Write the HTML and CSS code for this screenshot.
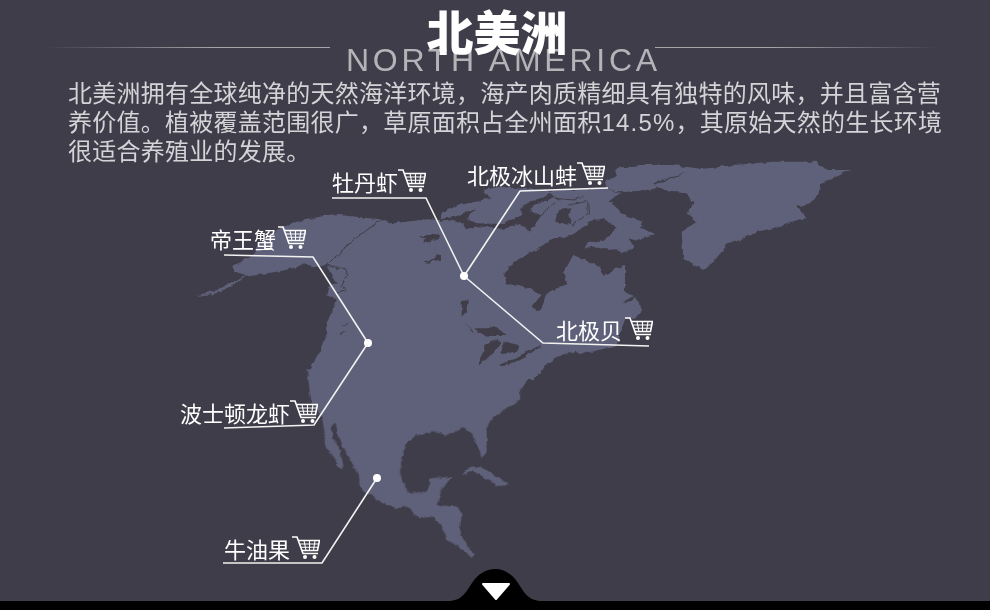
FILE: index.html
```html
<!DOCTYPE html>
<html lang="zh">
<head>
<meta charset="utf-8">
<title>北美洲</title>
<link rel="stylesheet" href="styles.css">
</head>
<body>
<svg width="0" height="0" class="defs">
  <filter id="rough" x="-5%" y="-5%" width="110%" height="110%">
    <feTurbulence type="fractalNoise" baseFrequency="0.16" numOctaves="2" seed="4"/>
    <feDisplacementMap in="SourceGraphic" scale="4.5" xChannelSelector="R" yChannelSelector="G"/>
  </filter>
  <symbol id="cart" viewBox="0 0 28 24">
    <path class="cart-line" d="M0 1 H5 L11 17.5 H26"/>
    <path class="cart-line" d="M6 4.5 H27.5 L25.5 14.5 H9.5"/>
    <path class="cart-line thin" d="M7.5 8 H27 M8.5 11.3 H26 M12 4.5 L14 14.5 M17.5 4.5 V14.5 M23 4.5 L21.5 14.5"/>
    <circle class="cart-wheel" cx="13" cy="21" r="2"/>
    <circle class="cart-wheel" cx="22.5" cy="21" r="2"/>
  </symbol>
</svg>
<main class="page">
  <svg class="map" viewBox="0 0 990 610" width="990" height="610" aria-hidden="true">
    <g class="coast">
    <g transform="translate(180 160) scale(.33333)">
      <path class="land" d="M45 408 L110 390 180 358 197 345 165 335 160 318 190 300 215 290 225 270 265 225 300 205 350 185 400 175 430 168 480 165 540 172 600 178 630 190 680 185 740 178 790 180 990 180 990 660 380 660 400 610 420 570 442 515 440 485 465 440 470 418 440 402 445 380 470 372 440 315 400 322 370 310 340 325 290 335 230 345 197 350 150 382 100 402 Z"/>
      <path class="gap" d="M605 178 L520 240 440 315"/>
      <path class="gap" d="M440 315 L470 325 495 325 500 345 485 375 495 390 470 400"/>
      <path class="gap" d="M481 525 L495 510 M490 500 L500 488"/>
      <path class="sea" d="M715 230 L760 222 800 225 770 235 745 250 725 245 740 238Z"/>
      <path class="sea" d="M730 305 L765 295 770 283 800 290 845 280 810 292 775 300 745 308Z"/>
    </g>
    <g transform="translate(440 160) scale(.33333)">
      <path class="land" d="M10 155 L60 135 105 125 155 112 130 100 125 90 180 80 225 85 340 92 380 90 500 85 540 100 505 125 510 125 560 170 610 185 600 200 645 225 590 240 565 235 585 265 545 278 540 290 555 315 555 395 580 410 600 430 605 455 590 472 555 478 530 555 420 585 410 572 350 590 305 630 280 660 0 660 0 180Z"/>
      <path class="land" d="M525 25 L600 15 700 15 790 28 720 42 640 70 655 85 600 92 540 97 500 85 495 65 530 45Z"/>
      <path class="land" d="M760 30 L880 15 1000 5 1130 5 1160 30 1230 30 1140 70 1145 90 1110 130 1070 140 1100 175 1000 205 950 215 880 245 860 250 850 270 800 328 770 320 730 295 725 215 770 185 740 160 760 130 740 100 690 95 640 75 720 45Z"/>
      <path class="sea" d="M0 178 L45 170 105 145 82 176 110 190 190 192 240 165 245 140 272 140 272 155 305 165 270 215 240 192 190 207 110 198 80 207 72 190 40 180 0 185Z"/>
      <path class="sea" d="M245 140 L270 125 300 115 330 98 345 112 300 128 272 142Z"/>
      <path class="sea" d="M345 185 L355 150 395 145 385 165 395 195 370 190Z"/>
      <path class="gap" d="M303 165 L345 128 M345 115 L400 120 430 110 M385 135 L440 125 M443 128 L445 160 395 198"/>
      <path class="sea" d="M190 340 L235 298 290 270 330 240 390 228 445 195 440 185 490 175 530 205 490 240 440 250 435 262 500 265 535 272 548 295 562 310 490 347 480 320 400 285 370 340 382 370 318 402 305 445 285 455 278 435 305 405 265 385 200 370Z"/>
      <path class="sea" d="M550 428 L570 415 598 405 575 422Z"/>
      <path class="sea" d="M100 505 L140 505 165 498 200 525 170 525 140 530Z"/>
      <path class="sea" d="M115 615 L135 555 170 540 185 548 165 575 135 600Z"/>
      <path class="sea" d="M180 580 L195 545 235 555 235 570 190 585Z"/>
      <path class="sea" d="M175 615 L230 595 290 560 305 558 240 600 185 618Z"/>
      <path class="sea" d="M65 425 L85 418 75 470 65 470Z"/>
      <path class="gap" d="M75 490 L100 515"/>
    </g>
    <g transform="translate(170 370) scale(.33333)">
      <path class="land" d="M410 -5 L420 70 425 100 455 140 465 195 460 210 490 265 515 300 520 285 510 240 490 205 482 170 497 158 505 205 530 250 548 280 565 320 565 345 590 370 630 395 680 415 710 410 750 445 790 440 810 465 835 510 860 525 900 560 915 555 880 510 870 480 875 430 860 410 800 405 815 360 845 320 780 325 770 365 720 370 705 350 690 310 695 260 710 220 740 195 800 185 825 195 880 175 905 190 935 265 950 240 950 180 960 150 1050 90 1050 60 1100 -5 Z"/>
      <path class="land" d="M875 315 L900 290 930 290 980 320 1020 345 975 348 960 330 910 305Z"/>
    </g>
    </g>
    <polyline class="lead" points="332,198 426,198 464,276"/>
    <polyline class="lead" points="608,188 520,191 464,276"/>
    <polyline class="lead" points="649,346 543,343 464,276"/>
    <polyline class="lead" points="224,255 313,257 368,343"/>
    <polyline class="lead" points="224,428 314,425 368,343"/>
    <polyline class="lead" points="223,563 322,563 377,478"/>
    <circle class="dot" cx="464" cy="276" r="4"/>
    <circle class="dot" cx="368" cy="343" r="4"/>
    <circle class="dot" cx="377" cy="478" r="4"/>
  </svg>

  <header class="head">
    <h1 class="title">北美洲</h1>
    <div class="sub-row">
      <span class="rule rule-left"></span>
      <span class="sub">NORTH AMERICA</span>
      <span class="rule rule-right"></span>
    </div>
    <p class="intro">北美洲拥有全球纯净的天然海洋环境，海产肉质精细具有独特的风味，并且富含营养价值。植被覆盖范围很广，草原面积占全州面积<span class="num">14.5%</span>，其原始天然的生长环境很适合养殖业的发展。</p>
  </header>

  <div class="stage">
    <a class="pin pin-shrimp">牡丹虾<svg class="cart"><use href="#cart"/></svg></a>
    <a class="pin pin-clam">北极冰山蚌<svg class="cart"><use href="#cart"/></svg></a>
    <a class="pin pin-crab">帝王蟹<svg class="cart"><use href="#cart"/></svg></a>
    <a class="pin pin-scallop">北极贝<svg class="cart"><use href="#cart"/></svg></a>
    <a class="pin pin-lobster">波士顿龙虾<svg class="cart"><use href="#cart"/></svg></a>
    <a class="pin pin-avocado">牛油果<svg class="cart"><use href="#cart"/></svg></a>
  </div>

  <footer class="bar">
    <svg class="bump" viewBox="0 0 94 33" width="94" height="33" aria-hidden="true">
      <path class="bump-fill" d="M0 32 C14 32 18 23 24 14 C30 5 38 0 47 0 C56 0 64 5 70 14 C76 23 80 32 94 32 V33 H0Z"/>
      <path class="bump-arrow" d="M35 15 H61 L48 30Z"/>
    </svg>
  </footer>
</main>
</body>
</html>
```

FILE: styles.css
```css
* { box-sizing: border-box; }
html, body { margin: 0; padding: 0; }
body { background: #3f3d49; overflow: hidden; }
.defs { position: absolute; }

.page {
  position: relative;
  width: 990px;
  height: 610px;
  display: flex;
  flex-direction: column;
  background: #3f3d49;
  font-family: "Liberation Sans", "Noto Sans CJK SC", sans-serif;
  overflow: hidden;
}

.map { position: absolute; left: 0; top: 0; }
.coast { filter: url(#rough); }
.land { fill: #5f6179; }
.sea { fill: #3f3d49; }
.gap { fill: none; stroke: #3f3d49; stroke-width: 3; }
.lead { fill: none; stroke: #f2f2f2; stroke-width: 1.6; }
.dot { fill: #fff; }

.head { position: relative; padding-top: 7px; height: 165px; flex: none; }
.title {
  position: relative;
  z-index: 2;
  margin: 0 0 -6px;
  font-family: "Noto Sans CJK SC", sans-serif;
  font-size: 47px;
  line-height: 46px;
  font-weight: 900;
  text-align: center;
  color: #fff;
  padding-left: 4px;
}
.sub-row {
  display: flex;
  height: 26px;
  padding-left: 46px;
}
.rule { display: block; width: 284px; height: 1px; flex: none; }
.rule-left { background: linear-gradient(90deg, rgba(170,170,175,0), #a5a5aa 60%); }
.rule-right { background: linear-gradient(90deg, #a5a5aa 40%, rgba(170,170,175,0)); }
.sub {
  flex: none;
  width: 325px;
  padding-left: 16px;
  font-size: 32px;
  line-height: 26px;
  letter-spacing: 3.75px;
  color: #b4b4b8;
  white-space: nowrap;
}
.intro {
  margin: 6px 0 0 68px;
  width: 880px;
  font-size: 24px;
  line-height: 29px;
  letter-spacing: .25px;
  color: #d4d4d8;
}
.num { letter-spacing: 1.2px; }

.stage { flex: 1; }
.pin {
  position: absolute;
  display: flex;
  align-items: center;
  font-family: "Noto Sans CJK SC", sans-serif;
  font-size: 22px;
  line-height: 28px;
  color: #fff;
  white-space: nowrap;
}
.cart { width: 28px; height: 24px; flex: none; }
.cart-line { fill: none; stroke: #fff; stroke-width: 1.6; }
.cart-line.thin { stroke-width: 1.1; }
.cart-wheel { fill: #fff; }

.pin-shrimp { left: 332px; top: 167px; }
.pin-clam { left: 467px; top: 160px; }
.pin-crab { left: 210px; top: 224px; }
.pin-scallop { left: 556px; top: 315px; }
.pin-lobster { left: 180px; top: 398px; }
.pin-avocado { left: 224px; top: 534px; }
.pin-avocado .cart, .pin-crab .cart { margin-left: 2px; }
.pin-scallop .cart { margin-left: 3px; }

.bar { position: relative; height: 9px; flex: none; background: #000; }
.bump { position: absolute; left: 448px; top: -32px; display: block; }
.bump-fill { fill: #000; }
.bump-arrow { fill: #fff; stroke: #fff; stroke-width: 2; stroke-linejoin: round; }
```
